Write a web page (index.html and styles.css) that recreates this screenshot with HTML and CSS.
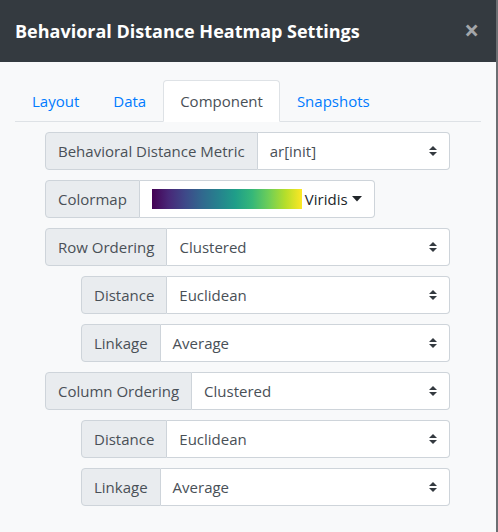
FILE: index.html
```html
<!DOCTYPE html>
<html>
<head>
<meta charset="utf-8">
<link rel="stylesheet" href="styles.css">
</head>
<body>
<div class="modal">
  <div class="modal-header">
    <h5 class="modal-title">Behavioral Distance Heatmap Settings</h5>
    <span class="close">&times;</span>
  </div>
  <div class="modal-body">
    <ul class="nav-tabs">
      <li class="nav-link">Layout</li>
      <li class="nav-link">Data</li>
      <li class="nav-link active">Component</li>
      <li class="nav-link">Snapshots</li>
    </ul>
    <div class="tab-content">
      <div class="input-group">
        <span class="ig-text">Behavioral Distance Metric</span>
        <div class="select"><span>ar[init]</span><svg class="arrows" width="8" height="10" viewBox="0 0 8 10"><path d="M4 0L8 4H0z M0 6H8L4 10z" fill="#343a40"/></svg></div>
      </div>
      <div class="input-group inline">
        <span class="ig-text">Colormap</span>
        <div class="cmap-btn"><span class="gradient"></span><span class="cmap-name">Viridis</span><svg class="caret" width="10" height="6" viewBox="0 0 10 6"><path d="M0 0H10L5 5.5z" fill="#212529"/></svg></div>
      </div>
      <div class="input-group">
        <span class="ig-text">Row Ordering</span>
        <div class="select"><span>Clustered</span><svg class="arrows" width="8" height="10" viewBox="0 0 8 10"><path d="M4 0L8 4H0z M0 6H8L4 10z" fill="#343a40"/></svg></div>
      </div>
      <div class="input-group nested">
        <span class="ig-text">Distance</span>
        <div class="select"><span>Euclidean</span><svg class="arrows" width="8" height="10" viewBox="0 0 8 10"><path d="M4 0L8 4H0z M0 6H8L4 10z" fill="#343a40"/></svg></div>
      </div>
      <div class="input-group nested">
        <span class="ig-text">Linkage</span>
        <div class="select"><span>Average</span><svg class="arrows" width="8" height="10" viewBox="0 0 8 10"><path d="M4 0L8 4H0z M0 6H8L4 10z" fill="#343a40"/></svg></div>
      </div>
      <div class="input-group">
        <span class="ig-text">Column Ordering</span>
        <div class="select"><span>Clustered</span><svg class="arrows" width="8" height="10" viewBox="0 0 8 10"><path d="M4 0L8 4H0z M0 6H8L4 10z" fill="#343a40"/></svg></div>
      </div>
      <div class="input-group nested">
        <span class="ig-text">Distance</span>
        <div class="select"><span>Euclidean</span><svg class="arrows" width="8" height="10" viewBox="0 0 8 10"><path d="M4 0L8 4H0z M0 6H8L4 10z" fill="#343a40"/></svg></div>
      </div>
      <div class="input-group nested">
        <span class="ig-text">Linkage</span>
        <div class="select"><span>Average</span><svg class="arrows" width="8" height="10" viewBox="0 0 8 10"><path d="M4 0L8 4H0z M0 6H8L4 10z" fill="#343a40"/></svg></div>
      </div>
    </div>
  </div>
</div>
</body>
</html>
```

FILE: styles.css
```css
html, body {
  margin: 0;
  padding: 0;
  background: #f8f9fa;
}
body {
  font-family: "Open Sans", "Noto Sans", sans-serif;
  font-size: 15px;
  color: #212529;
}
.modal {
  width: 496px;
  height: 532px;
  border-right: 2px solid #6c6f73;
  background: #f8f9fa;
  display: flex;
  flex-direction: column;
}
.modal-header {
  height: 62px;
  background: #343a40;
  display: flex;
  align-items: center;
  justify-content: space-between;
  padding: 0 17px 0 15px;
  flex-shrink: 0;
}
.modal-title {
  margin: 0;
  color: #fff;
  font-size: 18px;
  font-weight: 700;
  letter-spacing: 0;
}
.close {
  color: #a3a6aa;
  font-size: 26px;
  font-weight: 700;
  line-height: 1;
  margin-top: -2px;
}
.modal-body {
  padding: 18px 15px 0 15px;
}
.nav-tabs {
  list-style: none;
  margin: 0;
  padding: 0;
  display: flex;
  border-bottom: 1px solid #dee2e6;
}
.nav-link {
  padding: 8px 16px;
  line-height: 24px;
  color: #007bff;
  border: 1px solid transparent;
  border-top-left-radius: 4px;
  border-top-right-radius: 4px;
  margin-bottom: -1px;
}
.nav-link.active {
  color: #495057;
  background: #fff;
  border-color: #dee2e6 #dee2e6 #fff;
}
.tab-content {
  padding: 10px 31px 0 30px;
  display: flex;
  flex-direction: column;
  gap: 10px;
}
.input-group {
  display: flex;
  height: 38px;
}
.input-group.inline {
  align-self: flex-start;
}
.input-group.nested {
  margin-left: 36px;
}
.ig-text {
  display: flex;
  align-items: center;
  padding: 0 12px;
  background: #e9ecef;
  border: 1px solid #ced4da;
  border-radius: 4px 0 0 4px;
  color: #495057;
  white-space: nowrap;
}
.select {
  flex: 1;
  display: flex;
  align-items: center;
  justify-content: space-between;
  background: #fff;
  border: 1px solid #ced4da;
  border-left: none;
  border-radius: 0 4px 4px 0;
  padding: 0 12px 0 12px;
  color: #495057;
}
.arrows {
  display: block;
}
.cmap-btn {
  display: flex;
  align-items: center;
  background: #fff;
  border: 1px solid #ced4da;
  border-left: none;
  border-radius: 0 4px 4px 0;
  padding: 0 12px 0 12px;
}
.gradient {
  display: block;
  width: 150px;
  height: 20px;
  background: linear-gradient(to right, #440154, #482878, #3e4989, #31688e, #26828e, #1f9e89, #35b779, #6ece58, #b5de2b, #fde725);
}
.cmap-name {
  color: #212529;
  margin-left: 3px;
}
.caret {
  display: block;
  margin-left: 4px;
}
```
